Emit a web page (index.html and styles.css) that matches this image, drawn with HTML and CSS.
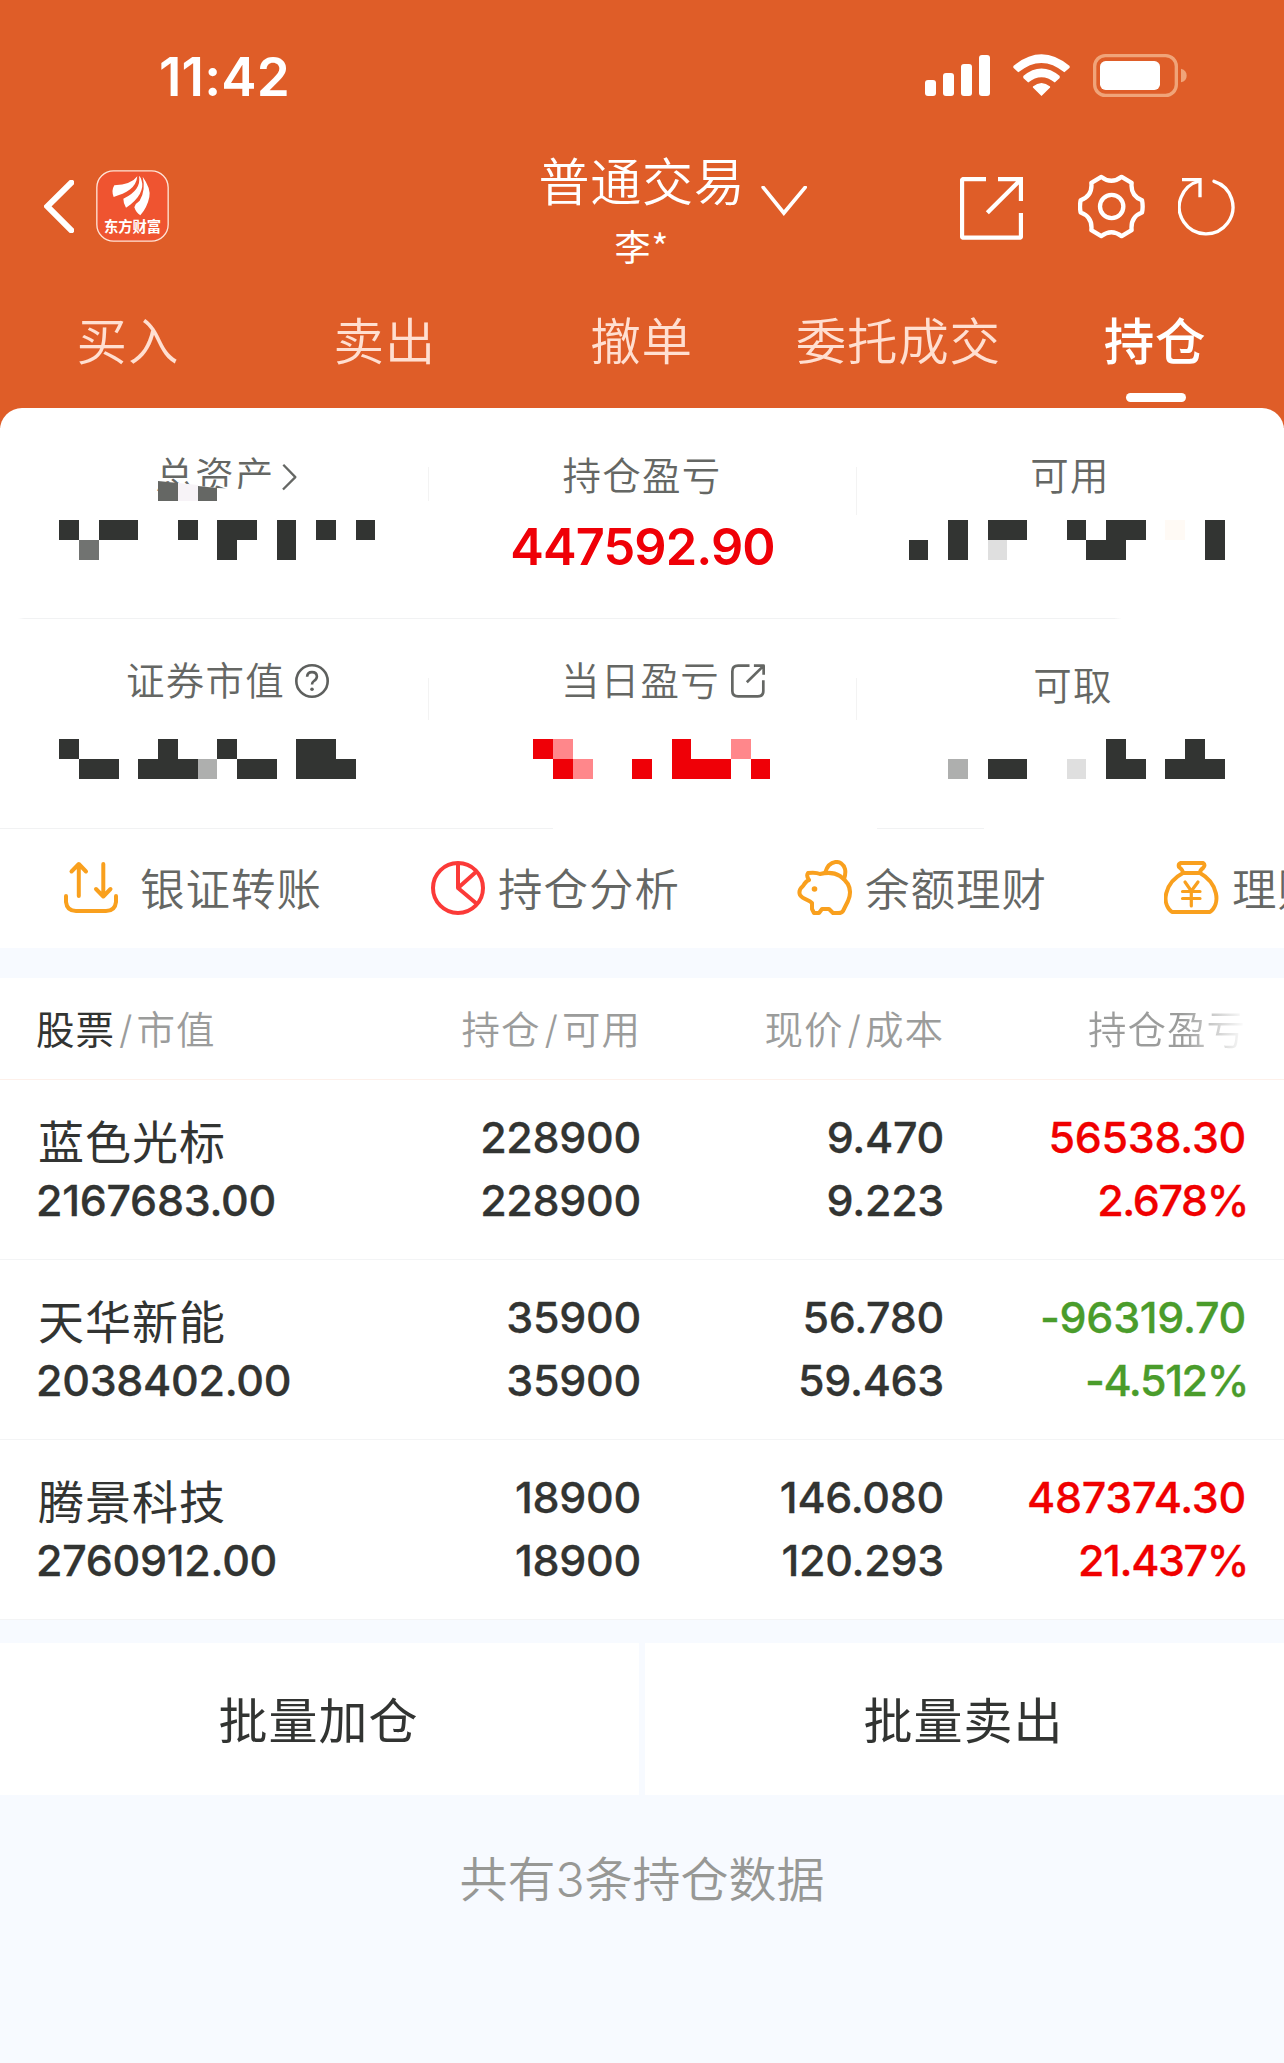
FILE: index.html
```html
<!DOCTYPE html>
<html lang="zh-CN">
<head>
<meta charset="utf-8">
<title>持仓</title>
<link rel="stylesheet" href="styles.css">
</head>
<body>
<header class="top">
  <div class="status">
    <span class="clock">11:42</span>
    <div class="status-icons">
      <svg class="signal" viewBox="0 0 65 42"><rect y="25" width="11" height="16" rx="3"/><rect x="18" y="18" width="11" height="23" rx="3"/><rect x="36" y="9" width="11" height="32" rx="3"/><rect x="54" width="11" height="41" rx="3"/></svg>
      <svg class="wifi" viewBox="459 72 172 126"><path d="M460 108Q545 37 630 108V113L614 127Q545 70 475 127L460 113ZM490 138Q545 93 600 138V144L585 158Q545 125 505 158L490 144ZM519 170Q545 148 571 170V173L545 198 519 173Z"/></svg>
      <svg class="battery" viewBox="699 72 282 129"><rect class="shell" x="704" y="77" width="245" height="119" rx="32"/><path class="nub" d="M963 116Q980 121 980 137T963 157Z"/><rect x="720" y="93" width="180" height="87" rx="17"/></svg>
    </div>
  </div>
  <nav class="nav">
    <svg class="back" viewBox="132 450 90 159"><path d="M214 458 142 529 214 601"/></svg>
    <svg class="logo" viewBox="288 420 219 216"><rect x="290.500" y="422.500" width="214" height="211" rx="50"/><path d="M412 439Q394 464 343 466Q333 482 341 501C380 489 408 475 412 439ZM417 437Q425 480 370 506Q370 520 378 533C418 508 433 474 425 452Q423 442 417 437ZM428 440Q453 475 448 501Q442 532 421 556Q408 548 403 532Q407 519 419 512Q438 480 428 440Z"/><text x="312" y="607" textLength="171">东方财富</text></svg>
    <div class="account">
      <div class="account-title">普通交易</div>
      <div class="account-name">李*</div>
    </div>
    <svg class="down" viewBox="992 167 137 90"><path d="M998 171 1060 248 1124 171"/></svg>
    <svg class="share" viewBox="300 441 189 189"><path d="M378 447H312Q306 447 306 453V617Q306 623 312 623H477Q483 623 483 617V549M414 447H483V513M480 451 382 548"/></svg>
    <svg class="gear" viewBox="654 434 201 194"><path d="M724 442Q754 466 785 442L815 460C812 487 822 503 846 512Q850 531 846 549C822 558 812 575 815 602L785 620Q754 596 724 620L694 602C697 575 687 558 662 549Q658 531 662 512C687 503 697 487 694 460Z"/><circle cx="755" cy="531" r="35"/></svg>
    <svg class="refresh" viewBox="950 442 177 177"><path d="M1058 455A80.500 80.500 0 1 1 1014 454"/><path class="hook" d="M962 450H1016V503"/></svg>
  </nav>
  <div class="tabs">
    <a>买入</a><a>卖出</a><a>撤单</a><a>委托成交</a><a class="active">持仓</a>
  </div>
</header>

<main>
  <section class="summary">
    <div class="row row-one">
      <div class="cell assets">
        <div class="label"><span>总资产</span><svg class="more" viewBox="843 190 46 83"><path d="M847 194 884 232 846 270"/></svg></div>
        <svg class="smudge" viewBox="0 0 140 20"><path class="paper" d="M0 0 59 7 139 10V20H0Z"/><path class="gray" d="M0 0 20 2V20H0ZM40 5 59 7V20H40Z"/><path class="pale" d="M20 2 40 4V20H20Z"/></svg>
        <svg class="mosaic" viewBox="0 0 428 40"><path d="M59 0h20v20h-20zM99 0h39v20h-39zM178 0h20v20h-20zM217 0h40v20h-20v20h-20zM277 0h19v40h-19zM316 0h20v20h-20zM356 0h19v20h-19z"/><path class="m-mid" d="M79 20h20v20h-20z"/></svg>
      </div>
      <div class="cell profit">
        <div class="label"><span>持仓盈亏</span></div>
        <div class="total">447592.90</div>
      </div>
      <div class="cell usable">
        <div class="label"><span>可用</span></div>
        <svg class="mosaic" viewBox="856 0 428 40"><path d="M909 20h19v20h-19zM948 0h20v40h-20zM988 0h39v20h-39zM1067 0h19v20h-19zM1106 0h40v20h-20v20h-40v-20h20zM1205 0h20v40h-20z"/><path class="m-pale" d="M988 20h19v20h-19z"/><path class="m-cream" d="M1165 0h20v20h-20z"/></svg>
      </div>
    </div>
    <div class="row row-two">
      <div class="cell value">
        <div class="label"><span>证券市值</span><svg class="help" viewBox="882 792 104 104"><circle cx="934" cy="844" r="48"/><path d="M919 831Q920 817 934 817T949 830Q949 838 940 844Q934 848 934 855"/><circle class="dot" cx="934" cy="869" r="5.500"/></svg></div>
        <svg class="mosaic" viewBox="0 0 428 40"><path d="M59 0h20v20h40v20h-40v-20h-20zM158 0h20v20h20v20h-60v-20h20zM217 0h20v20h40v20h-40v-20h-20zM296 0h40v20h20v20h-60z"/><path class="m-light" d="M198 20h19v20h-19z"/></svg>
      </div>
      <div class="cell today">
        <div class="label"><span>当日盈亏</span><svg class="open" viewBox="901 792 101 101"><path d="M956 797H922Q905 797 905 814V872Q905 888 922 888H980Q997 888 997 872V840M969 797H998V824M996 799 948 846"/></svg></div>
        <svg class="mosaic" viewBox="428 0 428 40"><path class="m-red" d="M533 0h20v20h20v20h-20v-20h-20zM632 20h20v20h-20zM672 0h19v20h40v20h-59zM751 20h19v20h-19z"/><path class="m-pink" d="M553 0h20v20h-20zM573 20h20v20h-20zM731 0h20v20h-20z"/></svg>
      </div>
      <div class="cell cash">
        <div class="label"><span>可取</span></div>
        <svg class="mosaic" viewBox="856 0 428 40"><path d="M988 20h39v20h-39zM1106 0h20v20h20v20h-40zM1185 0h20v20h20v20h-60v-20h20z"/><path class="m-light" d="M948 20h20v20h-20z"/><path class="m-pale" d="M1067 20h19v20h-19z"/></svg>
      </div>
    </div>
  </section>

  <section class="quick">
    <a class="wide"><svg class="orange" viewBox="63 860 56 56"><path d="M78.800 896V864.500M71.500 871.500 78.800 864 86 871.500M103.300 864V896M96 889 103.300 896.500 110.500 889M66 896V902Q67 911 76 911H106Q115 911 116 902V896"/></svg><span>银证转账</span></a>
    <a><svg class="crimson" viewBox="430 860 56 56"><circle cx="458" cy="888" r="25"/><path d="M458 863V888L477 871M458 888 477 904"/></svg><span>持仓分析</span></a>
    <a><svg class="orange" viewBox="797 860 56 56"><path d="M808 873Q816 872 820 874Q832 871 840 876C850 883 852 892 848 901L843 911Q842 913 838 913H833L829 909H822L819 913H814L812 909V903C809 899 803 900 800 895Q798 890 803 886Q806 881 809 880Q806 876 808 873Z"/><path d="M825 873C829 859 842 859 845 869Q846 873 844 879"/><circle class="eye" cx="814.500" cy="889" r="2.800"/></svg><span>余额理财</span></a>
    <a><svg class="orange" viewBox="1164 860 56 56"><path d="M1181 863H1203Q1206 865 1203 868Q1200 870 1200 873H1183Q1183 870 1179 867Q1178 864 1181 863ZM1183 873C1164 883 1161 904 1172 912H1210C1221 904 1218 883 1200 873"/><path class="thin" d="M1185 882 1191.300 891 1198 882M1182.500 891.500H1200M1182.500 898.500H1200M1191.300 891V906"/></svg><span>理财</span></a>
  </section>

  <section class="holdings">
    <div class="head">
      <span><b>股票</b><i>/</i>市值</span><span>持仓<i>/</i>可用</span><span>现价<i>/</i>成本</span><span class="fade">持仓盈亏</span>
    </div>
    <div class="stock">
      <div><h2>蓝色光标</h2><p>2167683.00</p></div>
      <div><p>228900</p><p>228900</p></div>
      <div><p>9.470</p><p>9.223</p></div>
      <div class="up"><p>56538.30</p><p class="rate">2.678%</p></div>
    </div>
    <div class="stock">
      <div><h2>天华新能</h2><p>2038402.00</p></div>
      <div><p>35900</p><p>35900</p></div>
      <div><p>56.780</p><p>59.463</p></div>
      <div class="fall"><p>-96319.70</p><p class="rate">-4.512%</p></div>
    </div>
    <div class="stock">
      <div><h2>腾景科技</h2><p>2760912.00</p></div>
      <div><p>18900</p><p>18900</p></div>
      <div><p>146.080</p><p>120.293</p></div>
      <div class="up"><p>487374.30</p><p class="rate">21.437%</p></div>
    </div>
  </section>

  <div class="batch"><button>批量加仓</button><button>批量卖出</button></div>
  <p class="count">共有3条持仓数据</p>
</main>
</body>
</html>
```
FILE: styles.css
```css
* { box-sizing: border-box; margin: 0; padding: 0; }
body {
  width: 1284px;
  height: 2063px;
  overflow: hidden;
  background: #f7faff;
  color: #323432;
  font-family: Inter, "Noto Sans CJK SC", sans-serif;
}
svg { display: block; flex: none; fill: none; stroke-linejoin: round; }

/* header */
.top { height: 428px; background: #df5d28; color: #fff; }
.status { display: flex; justify-content: space-between; height: 152px; padding: 54px 97px 0 159px; }
.clock { font-size: 53px; line-height: 46px; font-weight: 600; letter-spacing: 0.200px; }
.status-icons { display: flex; }
.status-icons svg { fill: #fff; }
.signal { width: 65px; height: 42px; margin: 1px 23px 0 0; }
.wifi { width: 57px; height: 42px; margin-right: 23px; }
.battery { width: 94px; height: 43px; }
.battery .shell { fill: none; stroke: #f0a479; stroke-width: 10; }
.battery .nub { fill: #f0a479; }

.nav { display: flex; height: 149px; }
.nav svg { stroke: #fff; }
.back { width: 30px; height: 53px; margin: 28px 0 0 44px; stroke-width: 18; stroke-linecap: round; stroke-linejoin: miter; }
.logo { width: 73px; height: 72px; margin: 18px 0 0 22px; }
.logo rect { fill: #ef5430; stroke: #ffe3d6; stroke-width: 4; }
.logo path { fill: #fff; stroke: none; }
.logo text { fill: #fff; stroke: none; font: 700 43px "Noto Sans CJK SC", sans-serif; }
.account { width: 208px; margin: 1px 1px 0 369px; text-align: center; }
.account-title { height: 68px; font-size: 51px; line-height: 60px; letter-spacing: 0.800px; font-weight: 350; white-space: nowrap; }
.account-name { font: 400 36px/48px "Noto Sans CJK SC", sans-serif; letter-spacing: 1px; }
.down { width: 46px; height: 30px; margin: 34px 0 0 14px; stroke-width: 11; stroke-linecap: round; stroke-linejoin: miter; }
.share { width: 63px; height: 63px; margin: 25px 0 0 153px; stroke-width: 13; stroke-linejoin: miter; }
.gear { width: 67px; height: 65px; margin: 22px 0 0 55px; stroke-width: 13; }
.refresh { width: 59px; height: 59px; margin: 25px 0 0 33px; stroke-width: 10; stroke-linecap: round; }
.refresh .hook { stroke-linecap: butt; stroke-linejoin: miter; }

.tabs { display: flex; height: 107px; }
.tabs a { flex: 1 0 0; display: flex; flex-direction: column; align-items: center; color: #ffdfd1; font-size: 50.500px; line-height: 82px; letter-spacing: 0.800px; text-indent: -1px; font-weight: 350; white-space: nowrap; }
.tabs .active { color: #fff; font-weight: 500; }
.tabs .active::after { content: ""; width: 60px; height: 9px; margin-top: 10px; border-radius: 4.500px; background: #fff; }

/* account summary */
main { margin-top: -20px; }
.summary { border-radius: 22px 22px 0 0; background: #fff; }
.row { display: grid; grid-template-columns: repeat(3, 428px); }
.row-one { height: 211px; background: linear-gradient(90deg, #fff, #f1f2f3 6px, #f1f2f3 1096px, #fff) 18px 100% / 1104px 1px no-repeat; }
.row-two { height: 210px; background: linear-gradient(#f1f2f3, #f1f2f3) 0 100% / 553px 1px no-repeat, linear-gradient(#f1f2f3, #f1f2f3) 877px 100% / 107px 1px no-repeat; }
.cell { display: flex; flex-direction: column; align-items: center; position: relative; }
.cell + .cell { background: linear-gradient(#f3f3f3, #f3f3f3) 0 59px / 1px 42px no-repeat; }
.row-one .profit { background-size: 1px 34px; }
.row-one .usable { background-size: 1px 48px; }
.label { display: flex; align-items: center; height: 40px; margin-top: 48px; color: #656764; font-size: 38.500px; letter-spacing: 1.200px; line-height: 40px; font-weight: 350; white-space: nowrap; }
.row-two .label { margin-top: 42px; }
.mosaic { width: 428px; height: 40px; margin-top: 24px; fill: #323432; shape-rendering: crispEdges; }
.row-two .mosaic { margin-top: 38px; }
.m-mid { fill: #717371; }
.m-light { fill: #aeafae; }
.m-pale { fill: #dfdfdf; }
.m-cream { fill: #fffaf5; }
.m-red { fill: #ef0007; }
.m-pink { fill: #ff878b; }
.smudge { position: absolute; left: 158px; top: 73px; width: 140px; height: 20px; }
.smudge .paper { fill: #fff; }
.smudge .gray { fill: #656764; }
.smudge .pale { fill: #f7f3f7; }
.more { width: 15px; height: 28px; margin: 2px 0 0 7px; stroke: #656764; stroke-width: 7; position: relative; z-index: 1; }
.assets .label { padding-left: 24px; }
.row-two .cash .label { padding-left: 6px; margin-top: 47px; }
.row-two .cash .mosaic { margin-top: 33px; }
.value .label { padding-left: 27px; }
.today .label { padding-left: 42px; }
.help { width: 34px; height: 34px; margin-left: 10px; stroke: #5e605e; stroke-width: 8; }
.help .dot { fill: #5e605e; stroke: none; }
.open { width: 34px; height: 34px; margin-left: 11px; stroke: #656764; stroke-width: 8; }
.total { margin-top: 20px; padding-left: 1px; color: #ef0007; font-size: 50.500px; font-weight: 600; line-height: 61px; letter-spacing: -0.900px; }

/* shortcuts */
.quick { display: flex; height: 119px; padding-left: 63px; overflow: hidden; background: #fff; }
.quick a { flex: none; display: flex; align-items: center; gap: 12px; width: 367px; color: #656764; font-size: 44.500px; font-weight: 350; letter-spacing: 1px; white-space: nowrap; }
.quick span { margin-top: -5px; }
.quick .wide { gap: 21px; }
.quick svg { width: 56px; height: 56px; margin-top: -1px; stroke-width: 4; }
.quick .orange { stroke: #f9a01e; stroke-linecap: round; }
.quick .crimson { stroke: #fb3a38; }
.quick .eye { fill: #f9a01e; stroke: none; }
.quick .thin { stroke-width: 3.200; }

/* holdings */
.holdings { margin-top: 30px; background: #fff; }
.head, .stock { display: grid; grid-template-columns: 300px 305px 303px 302px; padding-left: 36px; }
.head { height: 102px; border-bottom: 1px solid #fdf0ea; color: #9b9c9b; font-size: 38.500px; font-weight: 350; line-height: 104px; letter-spacing: 1px; }
.head b { color: #323432; font-weight: 400; }
.head i { padding: 0 3px 0 4px; font-style: normal; }
.head span + span, .stock div + div { text-align: right; }
.head .fade { background: linear-gradient(90deg, #9b9c9b 79%, #fff0 100%) text; color: transparent; }
.stock { height: 180px; border-bottom: 1px solid #f3f4f5; padding-top: 26px; }
.stock h2 { height: 63px; padding-left: 2px; font-size: 46px; font-weight: 400; line-height: 73px; letter-spacing: 1px; }
.stock p { height: 63px; font-size: 43px; font-weight: 500; line-height: 63px; letter-spacing: -0.300px; -webkit-text-stroke: 0.300px; }
.stock .rate { letter-spacing: -1.400px; margin-right: -2px; }
.up { color: #f00000; }
.fall { color: #4a9c2b; }

.batch { display: flex; gap: 6px; margin-top: 23px; }
.batch button { flex: 1; height: 152px; padding: 0 2px 3px 0; border: 0; background: #fff; color: #323432; font: 400 49px "Noto Sans CJK SC", sans-serif; letter-spacing: 1px; }
.count { margin-top: 54px; color: #979895; font: 350 48px/61px Inter, "Noto Sans CJK SC", sans-serif; text-align: center; }
```
